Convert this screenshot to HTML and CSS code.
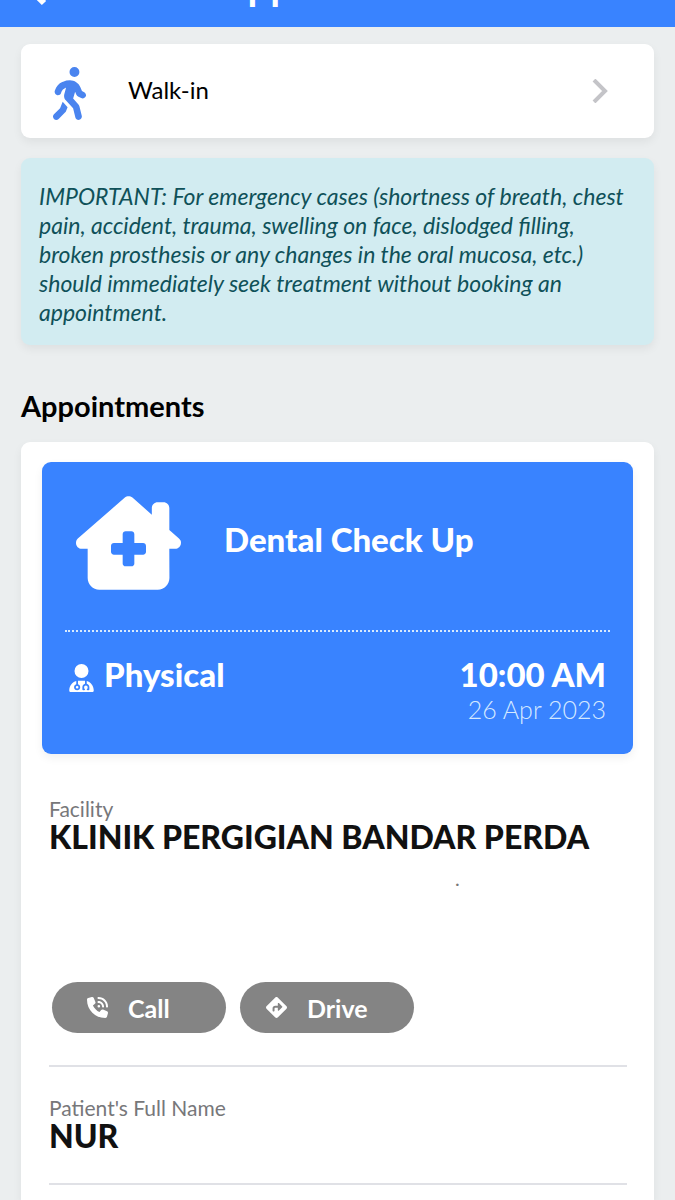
FILE: index.html
```html
<!DOCTYPE html>
<html lang="en">
<head>
<meta charset="utf-8">
<meta name="viewport" content="width=device-width, initial-scale=1">
<title>Appointment</title>
<link rel="stylesheet" href="styles.css">
</head>
<body>
<header class="topbar">
  <button class="back" type="button" aria-label="Back">
    <svg viewBox="0 0 24 40" width="24" height="40" aria-hidden="true"><path d="M20 4 4 20l16 16" fill="none" stroke="currentColor" stroke-width="6"/></svg>
  </button>
  <h1 class="title">Appointment</h1>
</header>
<main class="page">
  <a class="walkin" href="#walk-in">
    <svg class="walk-icon" viewBox="0 0 320 512" aria-hidden="true"><path d="M160 48a48 48 0 1 1 96 0 48 48 0 1 1-96 0zM126.5 199.3c-1 .4-1.9 .8-2.9 1.2l-8 3.5c-16.4 7.3-29 21.2-34.7 38.2l-2.6 7.8c-5.6 16.8-23.7 25.8-40.5 20.2s-25.8-23.7-20.2-40.5l2.6-7.8c11.4-34.1 36.6-61.9 69.4-76.5l8-3.5c20.8-9.2 43.3-14 66.1-14c44.6 0 84.8 26.8 101.9 67.9L281 232.7l21.4 10.7c15.8 7.9 22.2 27.1 14.3 42.9s-27.1 22.2-42.9 14.3L247 287.3c-10.3-5.2-18.4-13.8-22.8-24.5l-9.6-23-19.3 65.5 49.5 54c5.4 5.9 9.2 13 11.2 20.8l23 92.1c4.3 17.1-6.1 34.5-23.3 38.8s-34.5-6.1-38.8-23.3l-22-88.1-70.7-77.1c-14.8-16.1-20.3-38.6-14.7-59.7l16.9-63.5zM68.7 398l25-62.4c2.1 3 4.5 5.8 7 8.6l40.7 44.4-14.5 36.2c-2.4 6-6 11.5-10.6 16.1L54.6 502.6c-12.5 12.5-32.8 12.5-45.3 0s-12.5-32.8 0-45.3L68.7 398z"/></svg>
    <span class="walk-label">Walk-in</span>
    <svg class="chevron" viewBox="0 0 16 24" aria-hidden="true"><path d="M2 1 13 12 2 23" fill="none" stroke="currentColor" stroke-width="4"/></svg>
  </a>

  <p class="notice">IMPORTANT: For emergency cases (shortness of breath, chest pain, accident, trauma, swelling on face, dislodged filling, broken prosthesis or any changes in the oral mucosa, etc.) should immediately seek treatment without booking an appointment.</p>

  <h2 class="section-title">Appointments</h2>

  <section class="card">
    <div class="summary">
      <div class="summary-head">
        <svg class="house-icon" viewBox="0 0 576 512" aria-hidden="true"><path d="M543.8 287.6c17 0 32-14 32-32.1c1-9-3-17-11-24L512 185V64c0-17.7-14.3-32-32-32H448c-17.7 0-32 14.3-32 32v36.7L309.5 7c-6-5-14-7-21-7s-15 1-22 8L10 231.5c-7 7-10 15-10 24c0 18 14 32.1 32 32.1h32V448c0 35.3 28.7 64 64 64H448.5c35.5 0 64.2-28.8 64-64.3l-.7-160.2h32zM256 208c0-8.8 7.2-16 16-16h32c8.8 0 16 7.2 16 16v48h48c8.8 0 16 7.2 16 16v32c0 8.8-7.2 16-16 16H320v48c0 8.8-7.2 16-16 16H272c-8.8 0-16-7.2-16-16V320H208c-8.8 0-16-7.2-16-16V272c0-8.8 7.2-16 16-16h48V208z"/></svg>
        <h3 class="service">Dental Check Up</h3>
      </div>
      <div class="summary-foot">
        <div class="mode">
          <svg class="doctor-icon" viewBox="0 0 448 512" aria-hidden="true"><path d="M224 256A128 128 0 1 0 224 0a128 128 0 1 0 0 256zm-96 55.2C54 332.9 0 401.3 0 482.3C0 498.7 13.3 512 29.7 512H418.3c16.4 0 29.7-13.3 29.7-29.7c0-81-54-149.4-128-171.1V362c27.6 7.1 48 32.2 48 62v40c0 8.8-7.2 16-16 16H336c-8.8 0-16-7.2-16-16s7.2-16 16-16V424c0-17.7-14.3-32-32-32s-32 14.3-32 32v24c8.8 0 16 7.2 16 16s-7.2 16-16 16H256c-8.8 0-16-7.2-16-16V424c0-29.8 20.4-54.9 48-62V304.9c-6-.6-12.1-.9-18.3-.9H178.3c-6.2 0-12.3 .3-18.3 .9v65.4c23.1 6.9 40 28.3 40 53.7c0 30.9-25.1 56-56 56s-56-25.1-56-56c0-25.4 16.9-46.8 40-53.7V311.2zM144 448a24 24 0 1 0 0-48 24 24 0 1 0 0 48z"/></svg>
          <span>Physical</span>
        </div>
        <div class="when">
          <div class="time">10:00 AM</div>
          <div class="date">26 Apr 2023</div>
        </div>
      </div>
    </div>

    <div class="detail facility">
      <div class="label">Facility</div>
      <div class="value">KLINIK PERGIGIAN BANDAR PERDA</div>
      <div class="address">.</div>
      <div class="actions">
        <button class="pill" type="button">
          <svg class="pill-icon" viewBox="0 0 512 512" aria-hidden="true"><path d="M280 0C408.1 0 512 103.9 512 232c0 13.3-10.7 24-24 24s-24-10.7-24-24c0-101.6-82.4-184-184-184c-13.3 0-24-10.7-24-24s10.7-24 24-24zm8 192a32 32 0 1 1 0 64 32 32 0 1 1 0-64zm-32-72c0-13.3 10.7-24 24-24c75.1 0 136 60.9 136 136c0 13.3-10.7 24-24 24s-24-10.7-24-24c0-48.6-39.4-88-88-88c-13.3 0-24-10.7-24-24zM117.5 1.4c19.4-5.3 39.7 4.6 47.4 23.2l40 96c6.8 16.3 2.1 35.2-11.6 46.3L144 207.3c33.3 70.4 90.3 127.4 160.7 160.7L345 318.7c11.2-13.7 30-18.4 46.3-11.6l96 40c18.6 7.7 28.5 28 23.2 47.4l-24 88C481.8 499.9 466 512 448 512C200.6 512 0 311.4 0 64C0 46 12.1 30.2 29.5 25.4l88-24z"/></svg>
          <span>Call</span>
        </button>
        <button class="pill" type="button">
          <svg class="pill-icon" viewBox="0 0 512 512" aria-hidden="true"><path d="M227.7 11.7c15.6-15.6 40.9-15.6 56.6 0l216 216c15.6 15.6 15.6 40.9 0 56.6l-216 216c-15.6 15.6-40.9 15.6-56.6 0l-216-216c-15.6-15.6-15.6-40.9 0-56.6l216-216zm87.6 137c-4.6-4.6-11.5-5.9-17.4-3.5s-9.9 8.3-9.9 14.8v56H224c-35.3 0-64 28.7-64 64v48c0 13.3 10.7 24 24 24s24-10.7 24-24V280c0-8.8 7.2-16 16-16h64v56c0 6.5 3.9 12.3 9.9 14.8s12.9 1.1 17.4-3.5l80-80c6.2-6.2 6.2-16.4 0-22.6l-80-80z"/></svg>
          <span>Drive</span>
        </button>
      </div>
    </div>

    <div class="detail">
      <div class="label">Patient's Full Name</div>
      <div class="value">NUR</div>
    </div>
  </section>
</main>
</body>
</html>
```
FILE: styles.css
```css
* { box-sizing: border-box; }

body {
  display: flex;
  flex-direction: column;
  min-height: 100vh;
  margin: 0;
  background: #ebeeef;
  color: #000;
  font-family: Lato, "Liberation Sans", sans-serif;
  overflow-x: hidden;
}

h1, h2, h3, p { margin: 0; }
svg { display: block; flex: none; fill: currentColor; }

/* The bar is scrolled mostly out of view. */
.topbar {
  display: grid;
  flex: none;
  grid-template-columns: 1fr auto 1fr;
  align-items: center;
  height: 88px;
  margin-top: -61px;
  padding: 4px 24px 0;
  background: #3983ff;
  color: #fff;
}

.back {
  justify-self: start;
  padding: 4px 0 0;
  border: 0;
  background: none;
  color: inherit;
}

.title { font-size: 40px; line-height: 48px; font-weight: 700; }

.page {
  display: flex;
  flex: 1;
  flex-direction: column;
  padding: 17px 21px 0;
}

.walkin {
  display: flex;
  align-items: center;
  height: 94px;
  padding: 0 46px 0 32px;
  border-radius: 9px;
  background: #fff;
  box-shadow: 0 4px 10px rgba(0, 0, 0, 0.06);
  color: #000;
  text-decoration: none;
}

.walk-icon { width: 33px; height: 53px; margin-top: 4px; color: #4a84ef; }
.walk-label { flex: 1; margin-left: 42px; padding-bottom: 3px; font-size: 24px; line-height: 32px; }
.chevron { width: 16px; height: 24px; color: #c4c4c8; }

.notice {
  margin-top: 20px;
  padding: 24px 18px 18px;
  border-radius: 9px;
  background: #d2ecf1;
  box-shadow: 0 4px 10px rgba(0, 0, 0, 0.06);
  color: #0f5159;
  font-size: 23px;
  line-height: 29px;
  font-style: italic;
}

.section-title { margin: 44px 0 19px; font-size: 29px; line-height: 34px; font-weight: 700; }

.card {
  flex: 1;
  padding: 20px 21px 0;
  border-radius: 9px 9px 0 0;
  background: #fff;
  box-shadow: 0 4px 10px rgba(0, 0, 0, 0.06);
}

.summary {
  padding: 0 23px 30px;
  border-radius: 9px;
  background: #3983ff;
  box-shadow: 0 4px 10px rgba(0, 0, 0, 0.06);
  color: #fff;
}

.summary-head {
  display: flex;
  align-items: center;
  gap: 43px;
  padding: 34px 12px 40px 11px;
  border-bottom: 2px dotted #d7eaff;
}

.house-icon { width: 105px; height: 94px; }
.service { padding-bottom: 8px; font-size: 33px; line-height: 40px; font-weight: 900; }

.summary-foot {
  display: flex;
  justify-content: space-between;
  padding: 22px 4px 0;
}

.mode { display: flex; align-items: flex-start; gap: 10px; font-size: 33px; line-height: 40px; font-weight: 900; }
.doctor-icon { width: 25px; height: 28px; margin-top: 10px; }
.when { text-align: right; }
.time { font-size: 33px; line-height: 40px; font-weight: 900; }
.date { font-size: 25px; line-height: 30px; font-weight: 300; color: #d5e9ff; }

.detail {
  margin: 0 6px 0 7px;
  padding: 28px 0 32px;
  border-bottom: 2px solid #e0e1e6;
}

.facility { padding: 42px 0 32px; }

.label { font-size: 21px; line-height: 26px; color: #77777a; }
.value { font-size: 32px; line-height: 30px; font-weight: 900; color: #111; }
.address { height: 130px; padding-left: 406px; font-size: 20px; line-height: 52px; color: #777; }

.actions { display: flex; gap: 14px; padding-left: 3px; }

.pill {
  display: flex;
  align-items: center;
  gap: 20px;
  width: 174px;
  height: 51px;
  padding: 0 0 0 35px;
  border: 0;
  border-radius: 26px;
  background: #848484;
  color: #fff;
  font-family: inherit;
  font-size: 25px;
  line-height: 32px;
  font-weight: 700;
}

.pill + .pill { padding-left: 26px; }
.pill-icon { width: 21px; height: 21px; }
```
